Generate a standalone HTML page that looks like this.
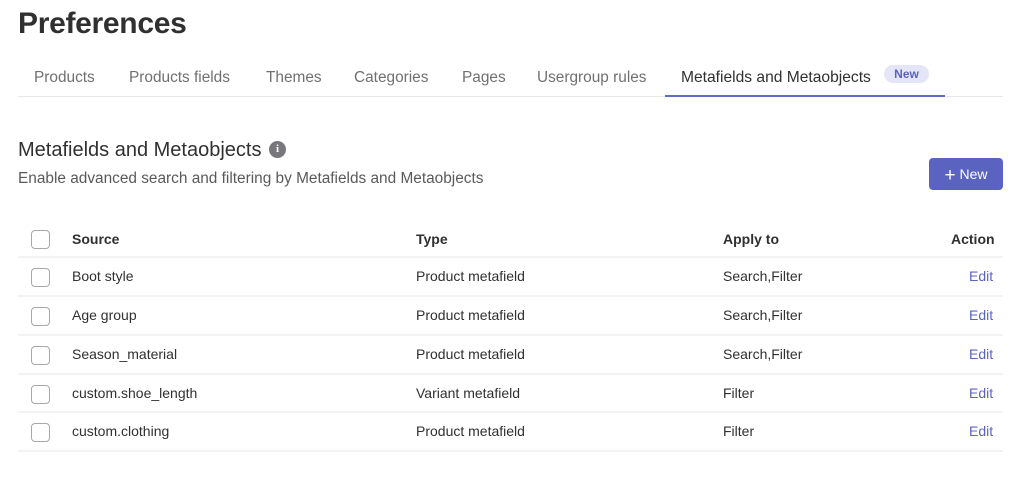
<!DOCTYPE html>
<html><head><meta charset="utf-8"><style>
*{margin:0;padding:0;box-sizing:border-box}
body{width:1024px;height:473px;background:#fff;font-family:"Liberation Sans",sans-serif;color:#303030;position:relative;overflow:hidden}
.abs{position:absolute;white-space:nowrap}
h1{position:absolute;left:18px;top:7px;font-size:30px;font-weight:bold;color:#303030;letter-spacing:-0.3px}
.tab{position:absolute;top:69px;font-size:15.4px;color:#707070;white-space:nowrap}
.tabline{position:absolute;left:18px;top:96px;width:985px;height:1px;background:#e8e8e8}
.active{position:absolute;left:665px;top:95px;width:280px;height:2px;background:#6269c4}
.badge{position:absolute;left:884px;top:65px;width:45px;height:18px;border-radius:9px;background:#e4e6f8;color:#5b63c1;font-size:12px;font-weight:bold;text-align:center;line-height:18px}
h2{position:absolute;left:18px;top:139px;font-size:20px;font-weight:normal;color:#303030;white-space:nowrap}
.info{position:absolute;left:269px;top:141px;width:17px;height:17px;border-radius:50%;background:#77777c;color:#fff;font-size:11px;font-weight:bold;text-align:center;line-height:17px;font-family:"Liberation Serif",serif}
.sub{position:absolute;left:18px;top:170px;font-size:15.4px;color:#5a5a5a;white-space:nowrap}
.btn{position:absolute;left:929px;top:158px;width:74px;height:32px;border-radius:4px;background:#5b63c1;color:#fff;font-size:14px;line-height:32px;text-align:center}
.row{position:absolute;left:18px;width:985px;height:39px;border-top:2px solid #f3f3f3}
.cb{position:absolute;left:31px;width:19px;height:19px;border:1.5px solid #a8a8a8;border-radius:4px}
.c{position:absolute;font-size:14px;color:#303030}
.hd{font-weight:bold}
.edit{color:#5b63c1}
</style></head><body>
<h1>Preferences</h1>
<div class="tab" style="left:34px">Products</div>
<div class="tab" style="left:129px">Products fields</div>
<div class="tab" style="left:266px">Themes</div>
<div class="tab" style="left:354px">Categories</div>
<div class="tab" style="left:462px">Pages</div>
<div class="tab" style="left:537px">Usergroup rules</div>
<div class="tab" style="left:681px;color:#303030;font-size:15.6px">Metafields and Metaobjects</div>
<div class="badge">New</div>
<div class="tabline"></div>
<div class="active"></div>
<h2>Metafields and Metaobjects</h2>
<div class="info">i</div>
<div class="sub">Enable advanced search and filtering by Metafields and Metaobjects</div>
<div class="btn"><span style="font-size:19px;vertical-align:-2px">+</span> New</div>

<div class="cb" style="top:230px"></div>
<div class="c hd abs" style="left:72px;top:231px">Source</div>
<div class="c hd abs" style="left:416px;top:231px">Type</div>
<div class="c hd abs" style="left:723px;top:231px">Apply to</div>
<div class="c hd abs" style="left:951px;top:231px">Action</div>

<div class="row" style="top:256px"></div>
<div class="cb" style="top:268px"></div>
<div class="c abs" style="left:72px;top:268px">Boot style</div>
<div class="c abs" style="left:416px;top:268px">Product metafield</div>
<div class="c abs" style="left:723px;top:268px">Search,Filter</div>
<div class="c abs edit" style="left:969px;top:268px">Edit</div>

<div class="row" style="top:295px"></div>
<div class="cb" style="top:307px"></div>
<div class="c abs" style="left:72px;top:307px">Age group</div>
<div class="c abs" style="left:416px;top:307px">Product metafield</div>
<div class="c abs" style="left:723px;top:307px">Search,Filter</div>
<div class="c abs edit" style="left:969px;top:307px">Edit</div>

<div class="row" style="top:334px"></div>
<div class="cb" style="top:346px"></div>
<div class="c abs" style="left:72px;top:346px">Season_material</div>
<div class="c abs" style="left:416px;top:346px">Product metafield</div>
<div class="c abs" style="left:723px;top:346px">Search,Filter</div>
<div class="c abs edit" style="left:969px;top:346px">Edit</div>

<div class="row" style="top:373px"></div>
<div class="cb" style="top:385px"></div>
<div class="c abs" style="left:72px;top:385px">custom.shoe_length</div>
<div class="c abs" style="left:416px;top:385px">Variant metafield</div>
<div class="c abs" style="left:723px;top:385px">Filter</div>
<div class="c abs edit" style="left:969px;top:385px">Edit</div>

<div class="row" style="top:411px"></div>
<div class="cb" style="top:423px"></div>
<div class="c abs" style="left:72px;top:423px">custom.clothing</div>
<div class="c abs" style="left:416px;top:423px">Product metafield</div>
<div class="c abs" style="left:723px;top:423px">Filter</div>
<div class="c abs edit" style="left:969px;top:423px">Edit</div>
<div class="row" style="top:450px"></div>
</body></html>
